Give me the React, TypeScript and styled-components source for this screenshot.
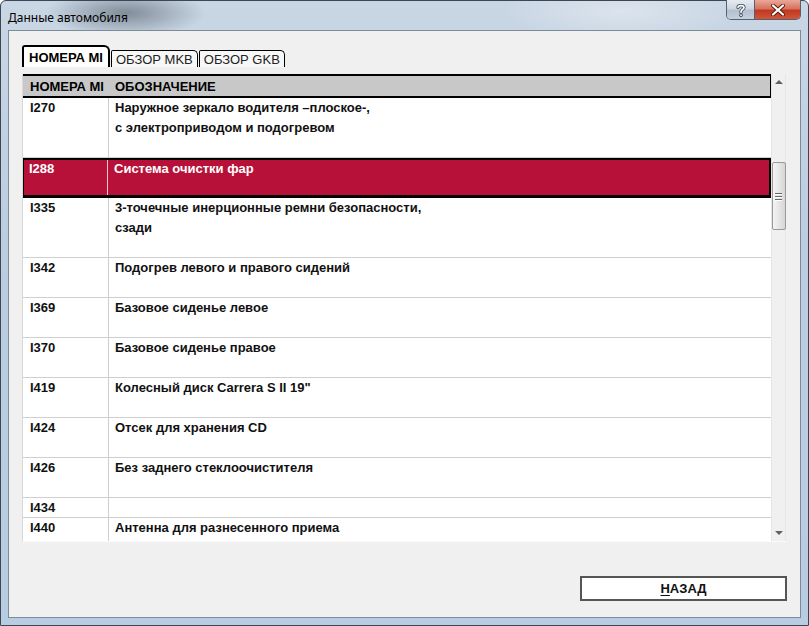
import styled, { createGlobalStyle } from 'styled-components';

const GlobalStyle = createGlobalStyle`
  html, body {
    margin: 0;
    padding: 0;
    overflow: hidden;
    background: #fff;
  }
  * {
    box-sizing: border-box;
  }
`;

const TABLE_FONT = `'Liberation Sans', Arial, sans-serif`;

const Window = styled.div`
  width: 809px;
  height: 626px;
  display: flex;
  flex-direction: column;
  padding: 0 7px 7px 7px;
  border: 1px solid #3c4654;
  border-radius: 6px 6px 0 0;
  background:
    radial-gradient(ellipse 80px 24px at 125px 12px, rgba(70, 80, 90, 0.55), transparent),
    radial-gradient(ellipse 120px 30px at 620px 10px, rgba(255, 255, 255, 0.35), transparent),
    linear-gradient(180deg, #c9d6e4 0%, #bccde0 40%, #b8cce2 100%);
`;

const TitleBar = styled.div`
  height: 29px;
  display: flex;
  justify-content: space-between;
  align-items: flex-start;
`;

const Title = styled.span`
  margin-top: 8px;
  font-family: 'Noto Sans', 'Open Sans', sans-serif;
  font-size: 12px;
  color: #000;
`;

const Controls = styled.div`
  display: flex;
  margin-top: -1px;
  border: 1px solid #58606e;
  border-top: none;
  border-radius: 0 0 5px 5px;
  overflow: hidden;
`;

const CaptionButton = styled.div<{ $variant: 'help' | 'close' }>`
  height: 19px;
  width: ${(p) => (p.$variant === 'close' ? '46px' : '27px')};
  display: flex;
  align-items: center;
  justify-content: center;
  background: ${(p) =>
    p.$variant === 'close'
      ? 'linear-gradient(180deg, #e9a89a 0%, #d7735f 45%, #c0391f 55%, #d2553a 100%)'
      : 'linear-gradient(180deg, #e4ebf2 0%, #cdd7e2 45%, #b2c0cf 55%, #c4d2df 100%)'};
  & + & {
    border-left: 1px solid #58606e;
  }
`;

const Client = styled.div`
  flex: 1;
  display: flex;
  flex-direction: column;
  background: #f0f0f0;
  border: 1px solid #7d8a99;
  padding: 14px 14px 16px 13px;
`;

const TabBar = styled.div`
  height: 22px;
  display: flex;
  align-items: flex-end;
  gap: 1px;
`;

const Tab = styled.div<{ $active?: boolean }>`
  height: ${(p) => (p.$active ? '22px' : '17px')};
  padding: ${(p) => (p.$active ? '0 5px' : '0 4px')};
  display: flex;
  align-items: center;
  font-family: ${TABLE_FONT};
  font-size: 13px;
  font-weight: ${(p) => (p.$active ? 700 : 400)};
  color: ${(p) => (p.$active ? '#000' : '#222')};
  background: ${(p) => (p.$active ? '#fff' : '#f7f7f7')};
  border: ${(p) => (p.$active ? '2px' : '1px')} solid #000;
  border-bottom: none;
  border-radius: ${(p) => (p.$active ? '3px 6px 0 0' : '2px 5px 0 0')};
`;

const TableFrame = styled.div`
  margin-top: 7px;
  height: 468px;
  display: flex;
  border-left: 1px solid #d8d8d8;
  border-bottom: 1px solid #fafafa;
`;

const TableBody = styled.div`
  flex: 1;
  display: flex;
  flex-direction: column;
  background: #fff;
  overflow: hidden;
`;

const HeaderRow = styled.div`
  height: 24px;
  flex-shrink: 0;
  display: grid;
  grid-template-columns: 86px 1fr;
  align-items: center;
  background: #c8c8c8;
  border-top: 2px solid #000;
  border-bottom: 2px solid #000;
  border-right: 1px solid #000;
  margin-left: -1px;
  font-family: ${TABLE_FONT};
  font-size: 13px;
  font-weight: 700;
  color: #000;
`;

const HeaderCell = styled.div<{ $first?: boolean }>`
  padding-left: ${(p) => (p.$first ? '8px' : '7px')};
  white-space: nowrap;
`;

const Row = styled.div<{ $height: number; $selected?: boolean }>`
  height: ${(p) => p.$height}px;
  flex-shrink: 0;
  display: grid;
  grid-template-columns: 86px 1fr;
  font-family: ${TABLE_FONT};
  font-size: 13px;
  font-weight: 700;
  line-height: 20px;
  color: ${(p) => (p.$selected ? '#fff' : '#111')};
  background: ${(p) => (p.$selected ? '#b81139' : '#fff')};
  border-bottom: 1px solid ${(p) => (p.$selected ? '#000' : '#cfcfcf')};
  box-shadow: ${(p) => (p.$selected ? 'inset 0 0 0 2px #000' : 'none')};
  margin-left: ${(p) => (p.$selected ? '-1px' : '0')};
`;

const IdCell = styled.div<{ $selected?: boolean }>`
  padding-left: 7px;
  border-right: 1px solid ${(p) => (p.$selected ? '#f0c8d2' : '#cfcfcf')};
  margin: ${(p) => (p.$selected ? '2px 0' : '0')};
  line-height: ${(p) => (p.$selected ? '16px' : '20px')};
  padding-top: ${(p) => (p.$selected ? '1px' : '0')};
`;

const DescCell = styled.div<{ $selected?: boolean }>`
  padding-left: 6px;
  padding-top: ${(p) => (p.$selected ? '1px' : '0')};
  white-space: nowrap;
`;

const Scrollbar = styled.div`
  width: 15px;
  flex-shrink: 0;
  display: flex;
  flex-direction: column;
  align-items: center;
  background: #f0f0f0;
  border-left: 1px solid #e6e6e6;
  border-right: 1px solid #e6e6e6;
  padding-top: 6px;
`;

const Arrow = styled.div<{ $down?: boolean }>`
  width: 0;
  height: 0;
  border-left: 4px solid transparent;
  border-right: 4px solid transparent;
  ${(p) => (p.$down ? 'border-top: 4px solid #606060;' : 'border-bottom: 4px solid #606060;')}
`;

const Thumb = styled.div`
  margin-top: 78px;
  width: 14px;
  height: 68px;
  border: 1px solid #9a9a9a;
  border-radius: 2px;
  background: linear-gradient(90deg, #f4f4f4 0%, #e6e6e6 50%, #d6d6d6 100%);
  display: flex;
  flex-direction: column;
  align-items: center;
  justify-content: center;
  gap: 2px;
`;

const Grip = styled.div`
  width: 7px;
  height: 1px;
  background: #666;
  box-shadow: 0 1px 0 #fff;
`;

const ScrollSpacer = styled.div`
  flex: 1;
`;

const ScrollEnd = styled.div`
  height: 6px;
`;

const Footer = styled.div`
  margin-top: 34px;
  display: flex;
  justify-content: flex-end;
`;

const Button = styled.button`
  width: 207px;
  height: 25px;
  margin-right: -1px;
  background: #fff;
  border: 2px solid #555;
  font-family: ${TABLE_FONT};
  font-size: 13px;
  font-weight: 700;
  color: #111;
  padding: 0;
  cursor: pointer;

  u {
    text-decoration-thickness: 1px;
    text-underline-offset: 2px;
  }
`;

interface Item {
  id: string;
  lines: string[];
  selected?: boolean;
}

const items: Item[] = [
  { id: 'I270', lines: ['Наружное зеркало водителя –плоское-,', 'с электроприводом и подогревом'] },
  { id: 'I288', lines: ['Система очистки фар'], selected: true },
  { id: 'I335', lines: ['3-точечные инерционные ремни безопасности,', 'сзади'] },
  { id: 'I342', lines: ['Подогрев левого и правого сидений'] },
  { id: 'I369', lines: ['Базовое сиденье левое'] },
  { id: 'I370', lines: ['Базовое сиденье правое'] },
  { id: 'I419', lines: ['Колесный диск Carrera S II 19"'] },
  { id: 'I424', lines: ['Отсек для хранения CD'] },
  { id: 'I426', lines: ['Без заднего стеклоочистителя'] },
  { id: 'I434', lines: [] },
  { id: 'I440', lines: ['Антенна для разнесенного приема'] },
];

// одна пустая строка после описания, как в оригинале
const rowHeight = (item: Item) => (item.lines.length ? (item.lines.length + 1) * 20 : 20);

const HelpIcon = () => (
  <svg width="12" height="14" viewBox="0 0 12 14">
    <path
      d="M3 4.5 C3 2 9 2 9 4.5 C9 6.5 6 6.5 6 8.5 L6 9.5"
      fill="none"
      stroke="#3a4452"
      strokeWidth="3.2"
      strokeLinecap="round"
    />
    <path
      d="M3 4.5 C3 2 9 2 9 4.5 C9 6.5 6 6.5 6 8.5 L6 9.5"
      fill="none"
      stroke="#fff"
      strokeWidth="1.6"
      strokeLinecap="round"
    />
    <circle cx="6" cy="12.2" r="1.7" fill="#3a4452" />
    <circle cx="6" cy="12.2" r="0.9" fill="#fff" />
  </svg>
);

const CloseIcon = () => (
  <svg width="14" height="12" viewBox="0 0 14 12">
    <path d="M2 1.5 L12 10.5 M12 1.5 L2 10.5" stroke="#5a1a10" strokeWidth="4" strokeLinecap="round" />
    <path d="M2 1.5 L12 10.5 M12 1.5 L2 10.5" stroke="#fff" strokeWidth="2.2" strokeLinecap="round" />
  </svg>
);

export default function App() {
  return (
    <>
      <GlobalStyle />
      <Window>
        <TitleBar>
          <Title>Данные автомобиля</Title>
          <Controls>
            <CaptionButton $variant="help">
              <HelpIcon />
            </CaptionButton>
            <CaptionButton $variant="close">
              <CloseIcon />
            </CaptionButton>
          </Controls>
        </TitleBar>
        <Client>
          <TabBar>
            <Tab $active>НОМЕРА MI</Tab>
            <Tab>ОБЗОР MKB</Tab>
            <Tab>ОБЗОР GKB</Tab>
          </TabBar>
          <TableFrame>
            <TableBody>
              <HeaderRow>
                <HeaderCell $first>НОМЕРА MI</HeaderCell>
                <HeaderCell>ОБОЗНАЧЕНИЕ</HeaderCell>
              </HeaderRow>
              {items.map((item) => (
                <Row key={item.id} $height={rowHeight(item)} $selected={item.selected}>
                  <IdCell $selected={item.selected}>{item.id}</IdCell>
                  <DescCell $selected={item.selected}>
                    {item.lines.map((line) => (
                      <div key={line}>{line}</div>
                    ))}
                  </DescCell>
                </Row>
              ))}
            </TableBody>
            <Scrollbar>
              <Arrow />
              <Thumb>
                <Grip />
                <Grip />
                <Grip />
              </Thumb>
              <ScrollSpacer />
              <Arrow $down />
              <ScrollEnd />
            </Scrollbar>
          </TableFrame>
          <Footer>
            <Button>
              <u>Н</u>АЗАД
            </Button>
          </Footer>
        </Client>
      </Window>
    </>
  );
}
